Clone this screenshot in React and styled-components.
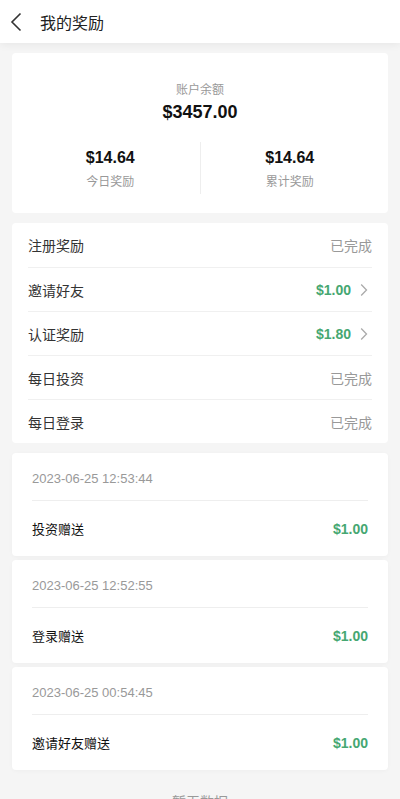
import styled, { createGlobalStyle } from 'styled-components';

const GlobalStyle = createGlobalStyle`
  * { box-sizing: border-box; }
  body {
    margin: 0;
    background: #f5f5f5;
    font-family: "Liberation Sans", "Noto Sans CJK SC", sans-serif;
    color: #333;
  }
`;

const Page = styled.div`
  min-height: 799px;
  background: #f5f5f5;
`;

const Header = styled.div`
  height: 43px;
  background: #fff;
  display: flex;
  align-items: center;
  padding-left: 10px;
  box-shadow: 0 2px 8px rgba(0, 0, 0, 0.06);
  position: relative;
  z-index: 1;
`;

const BackBtn = styled.div`
  width: 16px;
  height: 20px;
  display: flex;
  align-items: center;
  margin-right: 14px;
`;

const Title = styled.div`
  font-family: "Noto Sans CJK SC", sans-serif;
  font-size: 16px;
  color: #222;
`;

const Body = styled.div`
  padding: 10px 12px 0;
  display: flex;
  flex-direction: column;
  gap: 10px;
`;

const Card = styled.div`
  background: #fff;
  border-radius: 4px;
`;

const Balance = styled(Card)`
  height: 160px;
  padding: 28px 9px 0;
  display: flex;
  flex-direction: column;
  align-items: center;
`;

const Label = styled.div`
  font-family: "Noto Sans CJK SC", sans-serif;
  font-size: 12px;
  color: #999;
  line-height: 16px;
`;

const Amount = styled.div`
  font-weight: bold;
  font-size: ${p => p.size}px;
  color: #111;
  line-height: 22px;
  margin-top: ${p => p.top || 0}px;
`;

const Stats = styled.div`
  display: flex;
  width: 100%;
  margin-top: 19px;
`;

const Stat = styled.div`
  flex: 1;
  display: flex;
  flex-direction: column;
  align-items: center;
  gap: 4px;
  padding-top: 5px;
  height: 52px;
  & + & {
    border-left: 1px solid #eee;
  }
`;

const TaskList = styled(Card)`
  padding: 0 16px;
`;

const Task = styled.div`
  height: 44px;
  display: flex;
  align-items: center;
  justify-content: space-between;
  font-family: "Noto Sans CJK SC", sans-serif;
  font-size: 14px;
  & + & {
    border-top: 1px solid #f0f0f0;
  }
`;

const Done = styled.span`
  color: #999;
`;

const Reward = styled.span`
  display: flex;
  align-items: center;
  gap: 9px;
  color: #46a772;
  font-family: "Liberation Sans", sans-serif;
  font-weight: bold;
  font-size: 14px;
`;

const ChevronBox = styled.span`
  display: flex;
  margin-right: 4px;
`;

const Records = styled.div`
  display: flex;
  flex-direction: column;
  gap: 4px;
`;

const Record = styled(Card)`
  padding: 0 20px;
  box-shadow: 0 1px 4px rgba(0, 0, 0, 0.03);
`;

const Time = styled.div`
  padding: 15px 0 10px;
  line-height: 22px;
  font-size: 13px;
  color: #999;
  border-bottom: 1px solid #eee;
`;

const Item = styled.div`
  height: 55px;
  display: flex;
  align-items: center;
  justify-content: space-between;
  font-family: "Noto Sans CJK SC", sans-serif;
  font-size: 13px;
  color: #111;
`;

const Empty = styled.div`
  text-align: center;
  font-family: "Noto Sans CJK SC", sans-serif;
  font-size: 14px;
  color: #999;
  padding: 21px 0 20px;
`;

const Chevron = () => (
  <ChevronBox>
    <svg width="8" height="14" viewBox="0 0 8 14">
      <path d="M1.2 1.5l5.3 5.5-5.3 5.5" fill="none" stroke="#aaa" strokeWidth="1.3" />
    </svg>
  </ChevronBox>
);

const tasks = [
  { name: '注册奖励', done: true },
  { name: '邀请好友', reward: '$1.00' },
  { name: '认证奖励', reward: '$1.80' },
  { name: '每日投资', done: true },
  { name: '每日登录', done: true },
];

const records = [
  { time: '2023-06-25 12:53:44', name: '投资赠送', amount: '$1.00' },
  { time: '2023-06-25 12:52:55', name: '登录赠送', amount: '$1.00' },
  { time: '2023-06-25 00:54:45', name: '邀请好友赠送', amount: '$1.00' },
];

const App = () => {
  return (
    <Page>
      <GlobalStyle />
      <Header>
        <BackBtn>
          <svg width="12" height="20" viewBox="0 0 12 20">
            <path d="M10.5 1.5L2 10l8.5 8.5" fill="none" stroke="#333" strokeWidth="1.6" />
          </svg>
        </BackBtn>
        <Title>我的奖励</Title>
      </Header>
      <Body>
        <Balance>
          <Label>账户余额</Label>
          <Amount size={18} top={4}>$3457.00</Amount>
          <Stats>
            <Stat>
              <Amount size={16}>$14.64</Amount>
              <Label>今日奖励</Label>
            </Stat>
            <Stat>
              <Amount size={16}>$14.64</Amount>
              <Label>累计奖励</Label>
            </Stat>
          </Stats>
        </Balance>

        <TaskList>
          {tasks.map(t => (
            <Task key={t.name}>
              <span>{t.name}</span>
              {t.done ? (
                <Done>已完成</Done>
              ) : (
                <Reward>
                  {t.reward}
                  <Chevron />
                </Reward>
              )}
            </Task>
          ))}
        </TaskList>

        <Records>
          {records.map(r => (
            <Record key={r.time}>
              <Time>{r.time}</Time>
              <Item>
                <span>{r.name}</span>
                <Reward>{r.amount}</Reward>
              </Item>
            </Record>
          ))}
        </Records>
      </Body>
      <Empty>暂无数据</Empty>
    </Page>
  );
};

export default App;
